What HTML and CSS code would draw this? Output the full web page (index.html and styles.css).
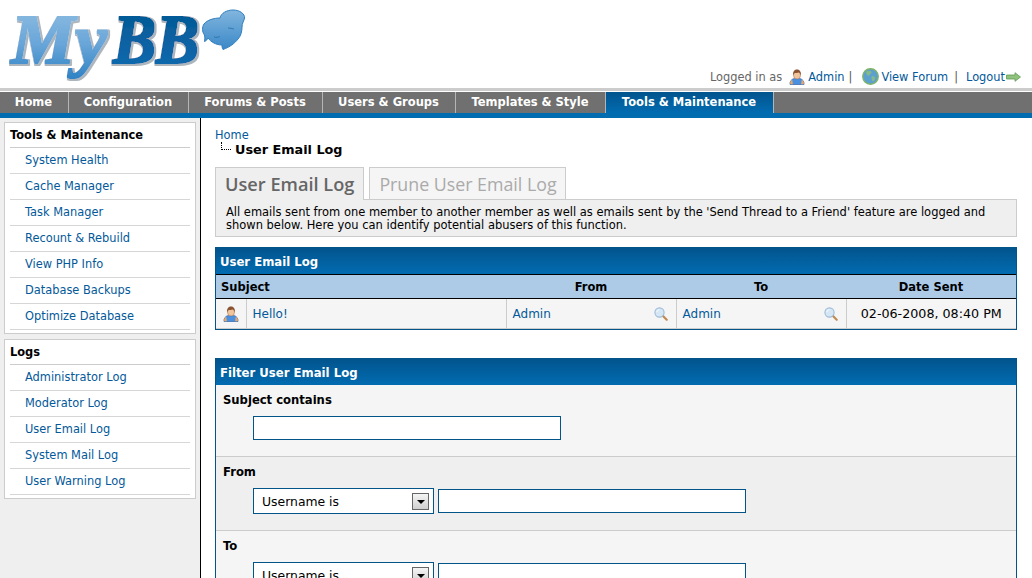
FILE: index.html
```html
<!DOCTYPE html>
<html lang="en-us">
<head>
<meta charset="utf-8">
<title>User Email Log</title>
<link rel="stylesheet" href="styles.css">
</head>
<body>

<svg class="defs" width="0" height="0">
	<defs>
		<linearGradient id="gradMy" x1="0" y1="0" x2="0" y2="1">
			<stop offset="0" stop-color="#93c0e2"/>
			<stop offset="0.55" stop-color="#68a5d8"/>
			<stop offset="1" stop-color="#2f82c4"/>
		</linearGradient>
		<linearGradient id="gradBB" x1="0" y1="0" x2="0" y2="1">
			<stop offset="0" stop-color="#04558f"/>
			<stop offset="1" stop-color="#0a6cb2"/>
		</linearGradient>
		<linearGradient id="gradBubble" x1="0" y1="0" x2="0" y2="1">
			<stop offset="0" stop-color="#82b6de"/>
			<stop offset="1" stop-color="#3a88c8"/>
		</linearGradient>
		<filter id="logoBevel" x="-10%" y="-10%" width="120%" height="120%">
			<feMorphology in="SourceAlpha" operator="dilate" radius="2.4" result="fat"/>
			<feOffset in="fat" dx="1" dy="1" result="fatShift"/>
			<feFlood flood-color="#aeb6bd"/>
			<feComposite in2="fatShift" operator="in" result="edge"/>
			<feMorphology in="SourceAlpha" operator="dilate" radius="1.2" result="mid"/>
			<feFlood flood-color="#e6ecf1"/>
			<feComposite in2="mid" operator="in" result="band"/>
			<feMorphology in="SourceGraphic" operator="dilate" radius="0.5" result="bold"/>
			<feMerge>
				<feMergeNode in="edge"/>
				<feMergeNode in="band"/>
				<feMergeNode in="bold"/>
			</feMerge>
		</filter>
		<symbol id="i-user" viewBox="0 0 16 16">
			<path d="M1 15.500c-.4-3 1.600-5.600 4.300-5.900h5.400c2.700.3 4.700 2.900 4.300 5.900z" fill="#4a90e2" stroke="#2f62a8" stroke-width=".7"/>
			<path d="M1.200 13c.4-1 1.100-1.800 2-2.500l.7 4.700H1.200zM14.800 13c-.4-1-1.100-1.800-2-2.500l-.7 4.700h2.700z" fill="#e8a868"/>
			<ellipse cx="8" cy="6" rx="3.600" ry="4" fill="#f0c49c" stroke="#a8734a" stroke-width=".5"/>
			<path d="M4.200 6.500C3.500 2.200 5.800.4 8 .4s4.500 1.800 3.800 6.100c-.4-1.600-1.300-2.700-2-3-1.300.5-3 .5-3.800.2-.7.4-1.400 1.300-1.800 2.800z" fill="#8a5230"/>
		</symbol>
		<symbol id="i-globe" viewBox="0 0 16 16">
			<circle cx="8" cy="8" r="7.300" fill="#5ba0cf" stroke="#7fb36a" stroke-width="1.300"/>
			<path d="M4 3.500c2-1.200 4-1 5 .2.300 1.400-1.400 1.300-1.800 2.600-.4 1.500-1.800 1-2.600 0-.6-.8-.8-2-.6-2.800zM9 8c1.400-.4 3 .1 3.400 1.200.2 1.500-1 3-2.200 3.500-.8-.9-1.600-3-1.200-4.700z" fill="#86b98a"/>
		</symbol>
		<symbol id="i-arrow" viewBox="0 0 15 10">
			<path d="M.5 3h8.500V.7L14.500 5 9 9.300V7H.5z" fill="#8fc27a" stroke="#5f9a58" stroke-width=".8"/>
		</symbol>
		<symbol id="i-search" viewBox="0 0 14 14">
			<path d="M8.500 8.500l4.200 4.200" stroke="#c08a50" stroke-width="2.200" stroke-linecap="round"/>
			<circle cx="5.500" cy="5.500" r="4.600" fill="#d5e6f5" stroke="#9dbcd8" stroke-width="1.100"/>
			<path d="M2.800 5.200c.3-1.500 1.200-2.300 2.700-2.500" fill="none" stroke="#fff" stroke-width="1"/>
		</symbol>
	</defs>
</svg>

<div class="page">

	<div class="logo-row">
		<svg class="logo" width="250" height="88" viewBox="0 0 250 88">
			<g filter="url(#logoBevel)">
				<text class="logo-text" x="11" y="63" textLength="96" lengthAdjust="spacingAndGlyphs" fill="url(#gradMy)">My</text>
				<text class="logo-text" x="113" y="63" textLength="86" lengthAdjust="spacingAndGlyphs" fill="url(#gradBB)">BB</text>
			</g>
			<path d="M220 18C221 13 227 10 233 10C240 10 245 14 244.500 18C244 21 242 23 242 27C242 31 241 36 238 39C235 43 230 47 223 49.500C222 48 222 46 222 45C216 45 211 42 208 38C207 40 206 41 204.500 41.500C205 39 205 37 204.500 35C202 32 202 27 204 24C207 20 214 18 220 18z" fill="url(#gradBubble)" stroke="#2f7fbe" stroke-width="1"/>
			<path d="M228 28c2 0 4 .5 6 1M214 37c2 .5 4 .5 6-.5" fill="none" stroke="#2a6fa8" stroke-width=".8"/>
		</svg>
		<div class="user-links">
			<span class="logged">Logged in as</span>
			<a href="#" class="ul-item"><svg class="ico16"><use href="#i-user"/></svg>Admin</a><span class="pipe pipe-first">|</span>
			<a href="#" class="ul-item ul-forum"><svg class="ico17"><use href="#i-globe"/></svg>View Forum</a><span class="pipe">|</span>
			<a href="#" class="ul-item ul-logout">Logout<svg class="ico-arrow"><use href="#i-arrow"/></svg></a>
		</div>
	</div>

	<ul class="menu">
		<li class="w-home"><a href="#">Home</a></li>
		<li class="w-conf"><a href="#">Configuration</a></li>
		<li class="w-forums"><a href="#">Forums &amp; Posts</a></li>
		<li class="w-users"><a href="#">Users &amp; Groups</a></li>
		<li class="w-tpl"><a href="#">Templates &amp; Style</a></li>
		<li class="w-tools active"><a href="#">Tools &amp; Maintenance</a></li>
	</ul>

	<div class="main">
		<div class="sidebar">
			<div class="side-box">
				<div class="side-title">Tools &amp; Maintenance</div>
				<ul class="side-list">
					<li><a href="#">System Health</a></li>
					<li><a href="#">Cache Manager</a></li>
					<li><a href="#">Task Manager</a></li>
					<li><a href="#">Recount &amp; Rebuild</a></li>
					<li><a href="#">View PHP Info</a></li>
					<li><a href="#">Database Backups</a></li>
					<li><a href="#">Optimize Database</a></li>
				</ul>
			</div>
			<div class="side-box">
				<div class="side-title">Logs</div>
				<ul class="side-list">
					<li><a href="#">Administrator Log</a></li>
					<li><a href="#">Moderator Log</a></li>
					<li><a href="#">User Email Log</a></li>
					<li><a href="#">System Mail Log</a></li>
					<li><a href="#">User Warning Log</a></li>
				</ul>
			</div>
		</div>

		<div class="content">
			<div class="crumb">
				<a href="#">Home</a>
				<div class="crumb-current"><span class="crumb-tree"></span>User Email Log</div>
			</div>

			<ul class="tabs">
				<li class="tab tab-on">User Email Log</li>
				<li class="tab">Prune User Email Log</li>
			</ul>
			<div class="tab-desc">All emails sent from one member to another member as well as emails sent by the 'Send Thread to a Friend' feature are logged and shown below. Here you can identify potential abusers of this function.</div>

			<div class="block log-block">
				<div class="block-head">User Email Log</div>
				<table class="log">
					<colgroup>
						<col class="col-icon">
						<col class="col-subject">
						<col class="col-name">
						<col class="col-name">
						<col>
					</colgroup>
					<tr>
						<th colspan="2" class="th-subject">Subject</th>
						<th>From</th>
						<th>To</th>
						<th>Date Sent</th>
					</tr>
					<tr>
						<td class="c-icon"><svg class="ico16"><use href="#i-user"/></svg></td>
						<td class="c-subject"><a href="#">Hello!</a></td>
						<td class="c-name"><div class="name-wrap"><a href="#">Admin</a><svg class="ico-search"><use href="#i-search"/></svg></div></td>
						<td class="c-name"><div class="name-wrap"><a href="#">Admin</a><svg class="ico-search"><use href="#i-search"/></svg></div></td>
						<td class="c-date">02-06-2008, 08:40 PM</td>
					</tr>
				</table>
			</div>

			<div class="block">
				<div class="block-head">Filter User Email Log</div>
				<div class="f-row f-first">
					<label class="f-label">Subject contains</label>
					<div class="f-field"><input class="f-input f-wide" type="text"></div>
				</div>
				<div class="f-row f-alt">
					<label class="f-label">From</label>
					<div class="f-field">
						<div class="f-select">Username is<span class="f-btn"><span class="f-caret"></span></span></div>
						<input class="f-input f-mid" type="text">
					</div>
				</div>
				<div class="f-row">
					<label class="f-label">To</label>
					<div class="f-field">
						<div class="f-select">Username is<span class="f-btn"><span class="f-caret"></span></span></div>
						<input class="f-input f-mid" type="text">
					</div>
				</div>
			</div>
		</div>
	</div>
</div>

</body>
</html>
```

FILE: styles.css
```css
* {
	box-sizing: border-box;
}

html, body {
	margin: 0;
	height: 100%;
	overflow: hidden;
}

body {
	background: #fff;
	color: #000;
	font-family: "DejaVu Sans", Verdana, sans-serif;
	font-size: 11.4px;
}

a {
	color: #03599a;
	text-decoration: none;
}

ul {
	list-style: none;
	margin: 0;
	padding: 0;
}

.defs {
	position: absolute;
}

.page {
	display: flex;
	flex-direction: column;
	height: 100%;
}

/* header */
.logo-row {
	display: flex;
	justify-content: space-between;
	align-items: flex-end;
	height: 88px;
	flex: none;
}

.logo {
	display: block;
}

.logo-text {
	font-family: "Liberation Serif", serif;
	font-weight: bold;
	font-style: italic;
	font-size: 70px;
}

.user-links {
	display: flex;
	align-items: center;
	padding: 0 11px 3px 0;
	font-size: 11.4px;
}

.logged {
	color: #666;
	margin-right: 7px;
}

.ul-item {
	display: flex;
	align-items: center;
	gap: 3px;
}

.ul-forum {
	gap: 2px;
}

.ul-logout {
	gap: 1px;
}

.pipe {
	margin: 0 8px 0 6px;
	color: #555;
}

.pipe-first {
	margin: 0 10px 0 4px;
}

.ico16 {
	width: 16px;
	height: 16px;
	display: block;
}

.ico17 {
	width: 17px;
	height: 17px;
	display: block;
}

.ico-arrow {
	width: 15px;
	height: 10px;
	display: block;
}

.ico-search {
	width: 14px;
	height: 14px;
	display: block;
}

/* menu */
.menu {
	display: flex;
	flex: none;
	height: 30px;
	background: #707070;
	border-top: 3px solid #ccc;
	border-bottom: 5px solid #026cb1;
	box-shadow: inset 0 1px 0 #fff;
	padding-top: 1px;
}

.menu li {
	border-right: 1px solid #b5b5b5;
}

.menu a {
	display: block;
	height: 21px;
	line-height: 21px;
	padding-right: 1px;
	text-align: center;
	color: #fff;
	font-weight: bold;
	font-size: 11.5px;
}

.w-home { width: 69px; }
.w-conf { width: 120px; }
.w-forums { width: 134px; }
.w-users { width: 133px; }
.w-tpl { width: 150px; }
.w-tools { width: 168px; }

.menu .active a {
	background: linear-gradient(#02548d, #026cb1);
}

/* sidebar */
.main {
	display: flex;
	flex: 1;
	min-height: 0;
}

.sidebar {
	width: 201px;
	flex: none;
	background: #efefef;
	border-right: 1px solid #000;
	padding: 4px 4px 0;
	font-size: 11.4px;
}

.side-box {
	width: 192px;
	background: #fff;
	border: 1px solid #ccc;
	padding: 0 5px 3px;
	margin-bottom: 5px;
}

.side-title {
	height: 25px;
	line-height: 24px;
	font-weight: bold;
	border-bottom: 1px solid #ccc;
	font-size: 11.4px;
}

.side-list li {
	height: 26px;
	line-height: 25px;
	border-bottom: 1px solid #d6d6d6;
	padding-left: 15px;
}

/* content */
.content {
	flex: 1;
	padding: 10px 15px 0 14px;
	min-width: 0;
}

.crumb {
	line-height: 14px;
}

.crumb-current {
	display: flex;
	font-weight: bold;
	font-size: 12.8px;
	line-height: 16px;
	padding-left: 6px;
}

.crumb-tree {
	width: 10px;
	height: 8px;
	margin-right: 4px;
	border-left: 1px dotted #000;
	border-bottom: 1px dotted #000;
}

.tabs {
	display: flex;
	margin-top: 9px;
	height: 33px;
}

.tab {
	height: 32px;
	margin-right: 5px;
	padding: 0 8px 0 9px;
	line-height: 33px;
	font-family: "Open Sans", "DejaVu Sans", sans-serif;
	font-size: 17.8px;
	color: #aaa;
	background: #f5f5f5;
	border: 1px solid #ccc;
	border-bottom: 0;
}

.tab-on {
	height: 33px;
	padding: 0 9px;
	font-size: 18.2px;
	font-weight: 600;
	color: #666;
	background: #efefef;
	position: relative;
	z-index: 1;
}

.tab-desc {
	background: #efefef;
	border: 1px solid #ccc;
	padding: 6px 9px 5px 10px;
	line-height: 13px;
	margin-top: -1px;
	height: 38px;
	font-size: 11.47px;
}

.block {
	border: 1px solid #035488;
	margin-top: 28px;
	background: #f5f5f5;
}

.log-block {
	margin-top: 10px;
}

.block-head {
	height: 26px;
	line-height: 28px;
	padding-left: 4px;
	color: #fff;
	font-weight: bold;
	font-size: 11.7px;
	background: linear-gradient(#02548d, #026cb1);
}

.log {
	width: 100%;
	border-collapse: collapse;
	table-layout: fixed;
}

.col-icon { width: 30px; }
.col-subject { width: 260px; }
.col-name { width: 170px; }

.log th {
	height: 24px;
	background: #adcbe7;
	border-top: 1px solid #000;
	border-bottom: 1px solid #000;
	font-size: 11.5px;
}

.log .th-subject {
	text-align: left;
	padding-left: 5px;
}

.log td {
	height: 30px;
	padding: 0;
	background: #f5f5f5;
	border-right: 1px solid #ccc;
	border-bottom: 1px solid #ccc;
	font-size: 12px;
}

.log td:last-child {
	border-right: 0;
}

.c-icon .ico16 {
	margin: 0 auto;
}

.log .c-subject {
	padding-left: 6px;
}

.name-wrap {
	display: flex;
	justify-content: space-between;
	align-items: center;
	padding: 0 8px 0 6px;
}

.log .c-date {
	text-align: center;
	font-size: 12.7px;
}

.f-row {
	padding: 7px 7px 0;
	height: 74px;
	border-bottom: 1px solid #ccc;
}

.f-first {
	height: 72px;
}

.f-alt {
	background: #efefef;
}

.f-label {
	display: block;
	font-weight: bold;
	font-size: 11.6px;
	line-height: 16px;
}

.f-field {
	display: flex;
	align-items: center;
	gap: 4px;
	padding: 8px 0 0 30px;
}

.f-input {
	display: block;
	height: 24px;
	border: 1px solid #035488;
	background: #fff;
	padding: 0;
	margin: 0;
}

.f-wide {
	width: 308px;
}

.f-mid {
	width: 308px;
}

.f-select {
	display: flex;
	justify-content: space-between;
	align-items: center;
	width: 181px;
	height: 26px;
	padding: 0 4px 0 8px;
	background: #fff;
	border: 1px solid #035488;
	font-size: 12.4px;
}

.f-btn {
	display: flex;
	justify-content: center;
	align-items: center;
	width: 17px;
	height: 17px;
	border: 1px solid #666;
	background: linear-gradient(#f5f5f5, #cfcfcf);
}

.f-caret {
	border: 4px solid transparent;
	border-top-color: #000;
	border-bottom: 0;
	margin-top: 2px;
}
```
